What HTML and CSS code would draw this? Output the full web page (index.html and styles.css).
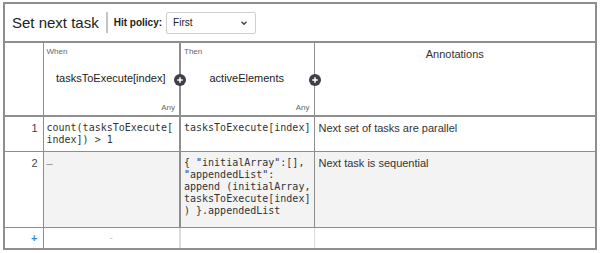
FILE: index.html
```html
<!DOCTYPE html>
<html lang="en">
<head>
    <meta charset="UTF-8">
    <title>Set next task</title>
    <link rel="stylesheet" href="styles.css">
</head>
<body>
    <div class="dmn">
        <div class="dmn-header">
            <span class="table-name">Set next task</span>
            <span class="sep"></span>
            <span class="hit-label">Hit policy:</span>
            <div class="select">
                <span>First</span>
                <svg width="8" height="6" viewBox="0 0 8 6"><path d="M1.5 1.8 L4 4.2 L6.5 1.8" fill="none" stroke="#444" stroke-width="1.4"/></svg>
            </div>
        </div>
        <table class="decision">
            <colgroup>
                <col class="c-index">
                <col class="c-input">
                <col class="c-output">
                <col class="c-annot">
            </colgroup>
            <thead>
                <tr>
                    <th class="index"></th>
                    <th class="input">
                        <div class="clause">
                            <span class="clause-kind">When</span>
                            <span class="clause-label">tasksToExecute[index]</span>
                            <span class="type-ref">Any</span>
                        </div>
                        <span class="add-col"><svg width="12" height="12" viewBox="0 0 12 12"><circle cx="6" cy="6" r="6" fill="#3d4046"/><path d="M6 3.2 V8.8 M3.2 6 H8.8" stroke="#fff" stroke-width="1.5"/></svg></span>
                    </th>
                    <th class="output">
                        <div class="clause">
                            <span class="clause-kind">Then</span>
                            <span class="clause-label">activeElements</span>
                            <span class="type-ref">Any</span>
                        </div>
                        <span class="add-col"><svg width="12" height="12" viewBox="0 0 12 12"><circle cx="6" cy="6" r="6" fill="#3d4046"/><path d="M6 3.2 V8.8 M3.2 6 H8.8" stroke="#fff" stroke-width="1.5"/></svg></span>
                    </th>
                    <th class="annotation">Annotations</th>
                </tr>
            </thead>
            <tbody>
                <tr class="rule">
                    <td class="index">1</td>
                    <td class="input code">count(tasksToExecute[index]) &gt; 1</td>
                    <td class="output code">tasksToExecute[index]</td>
                    <td class="annotation">Next set of tasks are parallel</td>
                </tr>
                <tr class="rule grey">
                    <td class="index">2</td>
                    <td class="input empty">–</td>
                    <td class="output code">{ "initialArray":[], "appendedList": append (initialArray, tasksToExecute[index]) }.appendedList</td>
                    <td class="annotation">Next task is sequential</td>
                </tr>
                <tr class="add-rule">
                    <td class="index add">+</td>
                    <td class="input">-</td>
                    <td class="output"></td>
                    <td class="annotation"></td>
                </tr>
            </tbody>
        </table>
    </div>
</body>
</html>
```

FILE: styles.css
```css
* {
    margin: 0;
    padding: 0;
    box-sizing: border-box;
}
body {
    font-family: "Liberation Sans", Arial, sans-serif;
    color: #333;
    background: #fff;
}
.dmn {
    margin: 2px 4px 0 3px;
    border: 2px solid #8e8e8e;
}

/* header: name + hit policy */
.dmn-header {
    display: flex;
    align-items: center;
    height: 39px;
    padding: 0 7px;
    border-bottom: 2px solid #8e8e8e;
}
.table-name {
    font-size: 15px;
    color: #222;
}
.sep {
    width: 2px;
    height: 21px;
    background: #c4c4c4;
    margin: 0 6px 0 7px;
}
.hit-label {
    font-size: 10px;
    font-weight: bold;
    color: #222;
    margin-right: 4px;
}
.select {
    display: flex;
    align-items: center;
    justify-content: space-between;
    width: 90px;
    height: 22px;
    padding: 0 7px 0 6px;
    border: 1px solid #cfcfcf;
    border-radius: 2px;
    font-size: 10px;
    color: #222;
}

/* decision table */
.decision {
    width: 100%;
    border-collapse: collapse;
    table-layout: fixed;
}
.c-index { width: 38px; }
.c-input { width: 137px; }
.c-output { width: 134px; }
.decision th,
.decision td {
    border-left: 1px solid #8e8e8e;
    border-top: 1px solid #8e8e8e;
    vertical-align: top;
    text-align: left;
    font-weight: normal;
}
.decision tr > :first-child {
    border-left: none;
}
.decision thead tr > * {
    border-top: none;
    border-bottom: 2px solid #8e8e8e;
    height: 72px;
}
.decision .output {
    border-left: 2px solid #8e8e8e;
}
.decision th.input,
.decision th.output {
    position: relative;
    padding: 4px 4px 3px 3px;
}
.clause {
    display: flex;
    flex-direction: column;
    height: 65px;
}
.clause-kind {
    font-size: 8px;
    color: #666;
}
.clause-label {
    flex: 1;
    display: flex;
    align-items: center;
    justify-content: center;
    font-size: 11px;
    color: #222;
    padding-bottom: 3px;
}
.type-ref {
    align-self: flex-end;
    font-size: 8px;
    color: #666;
}
.add-col {
    position: absolute;
    right: -7px;
    top: 31px;
    width: 12px;
    height: 12px;
    z-index: 2;
}
.add-col svg {
    display: block;
}
.decision th.annotation {
    text-align: center;
    font-size: 11px;
    color: #333;
    padding-top: 5px;
}

/* rules */
.rule td {
    padding: 5px 4px 4px 3px;
    font-size: 11px;
    line-height: 12px;
}
.rule:first-child td {
    border-top: none;
    height: 35px;
}
.rule.grey td {
    background: #f3f3f3;
    height: 76px;
}
.rule.grey td.index {
    background: #fff;
}
.rule td.index {
    text-align: right;
    padding-right: 5px;
    color: #444;
}
.rule td.code {
    font-family: "DejaVu Sans Mono", monospace;
    font-size: 10px;
    color: #333;
    padding-right: 1px;
    overflow-wrap: anywhere;
}
.empty {
    color: #888;
}
.rule td.annotation {
    padding-left: 4px;
}

/* add rule row */
.add-rule td {
    height: 21px;
    font-size: 9px;
    color: #bbb;
    text-align: center;
    vertical-align: middle;
}
.add-rule td.output,
.add-rule td.annotation {
    border-left-color: #ddd;
}
.add-rule td.add {
    text-align: right;
    padding-right: 5px;
    color: #2f8fe6;
    font-size: 11px;
    font-weight: bold;
}
```
